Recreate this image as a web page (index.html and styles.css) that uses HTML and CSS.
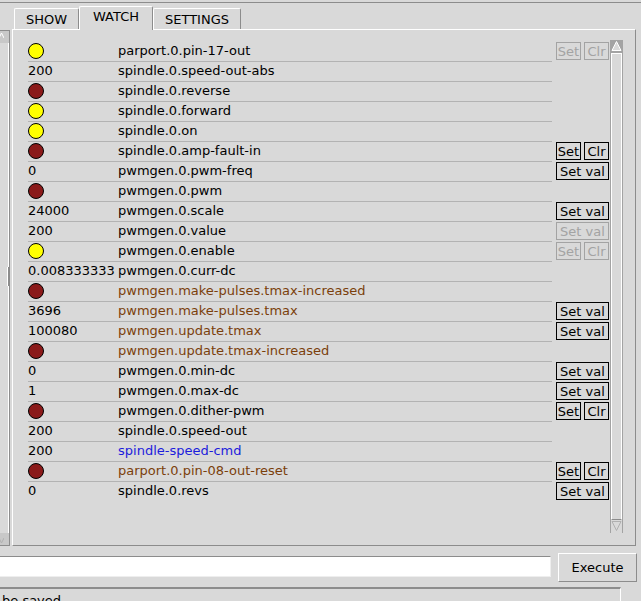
FILE: index.html
```html
<!DOCTYPE html>
<html lang="en">
<head>
  <meta charset="UTF-8" />
  <title>HAL Show</title>
  <link rel="stylesheet" href="styles.css">
</head>
<body>
  <div class="window">

    <div class="panes">
      <!-- left tree pane (only its scrollbar is visible) -->
      <div class="tree-side">
        <div class="tree-scroll">
          <div class="tree-arrow">
            <svg width="4" height="12" viewBox="0 0 4 12"><polyline points="-3,11 1.5,2 4,7" fill="none" stroke="#ffffff" stroke-width="1"/></svg>
          </div>
          <div class="tree-trough"><div class="tree-grip"></div></div>
          <div class="tree-arrow">
            <svg width="4" height="12" viewBox="0 0 4 12"><polyline points="-3,1 1.5,10 4,5" fill="none" stroke="#b0b0b0" stroke-width="1"/></svg>
          </div>
        </div>
      </div>

      <!-- notebook -->
      <div class="notebook">
        <div class="tabs">
          <div class="tab tab-show">SHOW</div>
          <div class="tab tab-watch active">WATCH</div>
          <div class="tab tab-settings">SETTINGS</div>
        </div>

        <div class="pane">
          <div class="watch">
            <div class="rows">

              <div class="row">
                <div class="cell"><span class="value"><span class="led yellow"></span></span><span class="name">parport.0.pin-17-out</span></div>
                <div class="actions"><span class="btn off">Set</span><span class="btn off">Clr</span></div>
              </div>
              <div class="row">
                <div class="cell"><span class="value">200</span><span class="name">spindle.0.speed-out-abs</span></div>
                <div class="actions"></div>
              </div>
              <div class="row">
                <div class="cell"><span class="value"><span class="led red"></span></span><span class="name">spindle.0.reverse</span></div>
                <div class="actions"></div>
              </div>
              <div class="row">
                <div class="cell"><span class="value"><span class="led yellow"></span></span><span class="name">spindle.0.forward</span></div>
                <div class="actions"></div>
              </div>
              <div class="row">
                <div class="cell"><span class="value"><span class="led yellow"></span></span><span class="name">spindle.0.on</span></div>
                <div class="actions"></div>
              </div>
              <div class="row">
                <div class="cell"><span class="value"><span class="led red"></span></span><span class="name">spindle.0.amp-fault-in</span></div>
                <div class="actions"><span class="btn">Set</span><span class="btn">Clr</span></div>
              </div>
              <div class="row">
                <div class="cell"><span class="value">0</span><span class="name">pwmgen.0.pwm-freq</span></div>
                <div class="actions"><span class="btn wide">Set val</span></div>
              </div>
              <div class="row">
                <div class="cell"><span class="value"><span class="led red"></span></span><span class="name">pwmgen.0.pwm</span></div>
                <div class="actions"></div>
              </div>
              <div class="row">
                <div class="cell"><span class="value">24000</span><span class="name">pwmgen.0.scale</span></div>
                <div class="actions"><span class="btn wide">Set val</span></div>
              </div>
              <div class="row">
                <div class="cell"><span class="value">200</span><span class="name">pwmgen.0.value</span></div>
                <div class="actions"><span class="btn wide off">Set val</span></div>
              </div>
              <div class="row">
                <div class="cell"><span class="value"><span class="led yellow"></span></span><span class="name">pwmgen.0.enable</span></div>
                <div class="actions"><span class="btn off">Set</span><span class="btn off">Clr</span></div>
              </div>
              <div class="row">
                <div class="cell"><span class="value">0.008333333</span><span class="name">pwmgen.0.curr-dc</span></div>
                <div class="actions"></div>
              </div>
              <div class="row">
                <div class="cell"><span class="value"><span class="led red"></span></span><span class="name param">pwmgen.make-pulses.tmax-increased</span></div>
                <div class="actions"></div>
              </div>
              <div class="row">
                <div class="cell"><span class="value">3696</span><span class="name param">pwmgen.make-pulses.tmax</span></div>
                <div class="actions"><span class="btn wide">Set val</span></div>
              </div>
              <div class="row">
                <div class="cell"><span class="value">100080</span><span class="name param">pwmgen.update.tmax</span></div>
                <div class="actions"><span class="btn wide">Set val</span></div>
              </div>
              <div class="row">
                <div class="cell"><span class="value"><span class="led red"></span></span><span class="name param">pwmgen.update.tmax-increased</span></div>
                <div class="actions"></div>
              </div>
              <div class="row">
                <div class="cell"><span class="value">0</span><span class="name">pwmgen.0.min-dc</span></div>
                <div class="actions"><span class="btn wide">Set val</span></div>
              </div>
              <div class="row">
                <div class="cell"><span class="value">1</span><span class="name">pwmgen.0.max-dc</span></div>
                <div class="actions"><span class="btn wide">Set val</span></div>
              </div>
              <div class="row">
                <div class="cell"><span class="value"><span class="led red"></span></span><span class="name">pwmgen.0.dither-pwm</span></div>
                <div class="actions"><span class="btn">Set</span><span class="btn">Clr</span></div>
              </div>
              <div class="row">
                <div class="cell"><span class="value">200</span><span class="name">spindle.0.speed-out</span></div>
                <div class="actions"></div>
              </div>
              <div class="row">
                <div class="cell"><span class="value">200</span><span class="name signal">spindle-speed-cmd</span></div>
                <div class="actions"></div>
              </div>
              <div class="row">
                <div class="cell"><span class="value"><span class="led red"></span></span><span class="name param">parport.0.pin-08-out-reset</span></div>
                <div class="actions"><span class="btn">Set</span><span class="btn">Clr</span></div>
              </div>
              <div class="row">
                <div class="cell"><span class="value">0</span><span class="name">spindle.0.revs</span></div>
                <div class="actions"><span class="btn wide">Set val</span></div>
              </div>

            </div>

            <!-- vertical scrollbar -->
            <div class="vscroll">
              <div class="arrow up">
                <svg width="11" height="12" viewBox="0 0 11 12"><polygon points="5.5,1.5 1,10.5 10,10.5" fill="#d9d9d9" stroke="#ffffff" stroke-width="1"/></svg>
              </div>
              <div class="thumb"></div>
              <div class="arrow down">
                <svg width="11" height="12" viewBox="0 0 11 12"><polygon points="1,1.5 10,1.5 5.5,10.5" fill="#d9d9d9" stroke="#b0b0b0" stroke-width="1"/></svg>
              </div>
            </div>
          </div>
        </div>
      </div>
    </div>

    <!-- command line -->
    <div class="command">
      <div class="entry"></div>
      <div class="execute">Execute</div>
    </div>

    <div class="status">be saved</div>
  </div>
</body>
</html>
```

FILE: styles.css
```css
body {
  margin: 0;
  padding-top: 2px;
  width: 641px;
  height: 601px;
  overflow: hidden;
  background: #d9d9d9;
  font-family: "DejaVu Sans", sans-serif;
  font-size: 13px;
  color: #000;
}

.window {
  border-top: 1px solid #8c8c8c;
}

.panes {
  display: flex;
  height: 543px;
}

/* left tree scrollbar, cut by the window edge */
.tree-side {
  width: 12px;
  padding-top: 27px;
  box-sizing: border-box;
}

.tree-scroll {
  width: 10px;
  height: 516px;
  box-sizing: border-box;
  border-top: 1px solid #8c8c8c;
  border-bottom: 1px solid #8c8c8c;
  border-right: 1px solid #8c8c8c;
  display: flex;
  flex-direction: column;
}

.tree-arrow {
  height: 12px;
  background: #c8c8c8;
}

.tree-arrow svg {
  display: block;
}

.tree-trough {
  flex: 1;
  position: relative;
  border-right: 1px solid #ffffff;
  margin-right: 0;
}

.tree-grip {
  position: absolute;
  left: 7px;
  top: 224px;
  width: 1px;
  height: 19px;
  background: #ffffff;
  border-right: 1px solid #8c8c8c;
}

/* notebook */
.notebook {
  width: 624px;
  padding-top: 3px;
}

.tabs {
  display: flex;
  align-items: flex-end;
  height: 23px;
  padding-left: 2px;
  position: relative;
  z-index: 1;
}

.tab {
  box-sizing: border-box;
  height: 21px;
  padding-top: 3px;
  line-height: 15px;
  text-align: center;
  border-top: 1px solid #ffffff;
  border-left: 1px solid #ffffff;
  border-right: 1px solid #8c8c8c;
  border-radius: 2px 2px 0 0;
  background: #d9d9d9;
}

.tab-show { width: 65px; }
.tab-watch { width: 74px; }
.tab-settings { width: 88px; }

.tab.active {
  height: 24px;
  margin-bottom: -1px;
  padding-top: 2px;
}

.pane {
  height: 517px;
  box-sizing: border-box;
  border-top: 1px solid #ffffff;
  border-left: 1px solid #ffffff;
  border-right: 1px solid #8c8c8c;
  border-bottom: 1px solid #8c8c8c;
}

.watch {
  display: flex;
  padding: 10px 0 0 15px;
}

.rows {
  margin-top: 2px;
}

.row {
  display: flex;
  height: 20px;
}

.cell {
  display: flex;
  width: 524px;
  height: 20px;
  box-sizing: border-box;
  border-bottom: 1px solid #b3b3b3;
  line-height: 17px;
  white-space: nowrap;
}

.row:last-child .cell {
  border-bottom-color: transparent;
}

.value {
  width: 90px;
  flex: none;
  overflow: visible;
}

.name {
  flex: 1;
}

.name.param {
  color: #7b3f0b;
}

.name.signal {
  color: #1c1cdc;
}

.led {
  display: block;
  width: 16px;
  height: 16px;
  margin-top: 1px;
  box-sizing: border-box;
  border: 1px solid #000;
  border-radius: 50%;
}

.led.yellow { background: #ffff00; }
.led.red { background: #8b1a1a; }

.actions {
  display: flex;
  gap: 3px;
  width: 53px;
  margin-left: 4px;
}

.btn {
  box-sizing: border-box;
  width: 25px;
  height: 18px;
  padding-top: 1px;
  line-height: 16px;
  text-align: center;
  border: 1px solid #000;
  white-space: nowrap;
}

.btn.wide {
  width: 53px;
}

.btn.off {
  color: #a3a3a3;
  border-color: #a3a3a3;
}

/* right scrollbar */
.vscroll {
  width: 13px;
  height: 493px;
  margin-left: 1px;
  box-sizing: border-box;
  display: flex;
  flex-direction: column;
  border-left: 1px solid #a3a3a3;
  border-right: 1px solid #a3a3a3;
}

.arrow {
  height: 13px;
}

.arrow svg {
  display: block;
}

.arrow.up {
  background: #a3a3a3;
}

.thumb {
  flex: 1;
  border-left: 1px solid #ffffff;
  border-right: 1px solid #ffffff;
  border-top: 1px solid #ffffff;
  border-bottom: 1px solid #8c8c8c;
}

/* command line */
.command {
  display: flex;
  align-items: flex-start;
  margin-top: 7px;
  height: 29px;
}

.entry {
  width: 551px;
  height: 21px;
  margin-top: 3px;
  box-sizing: border-box;
  background: #ffffff;
  border-top: 1px solid #8c8c8c;
  border-right: 1px solid #eeeeee;
  border-bottom: 1px solid #eeeeee;
}

.execute {
  box-sizing: border-box;
  width: 79px;
  height: 29px;
  margin-left: 7px;
  line-height: 27px;
  text-align: center;
  border-top: 1px solid #ffffff;
  border-left: 1px solid #ffffff;
  border-right: 1px solid #8c8c8c;
  border-bottom: 1px solid #8c8c8c;
}

.status {
  width: 621px;
  height: 40px;
  margin-top: 5px;
  box-sizing: border-box;
  padding: 4px 0 0 2px;
  line-height: 15px;
  border-top: 2px solid #8c8c8c;
  border-right: 1px solid #ffffff;
}
```
